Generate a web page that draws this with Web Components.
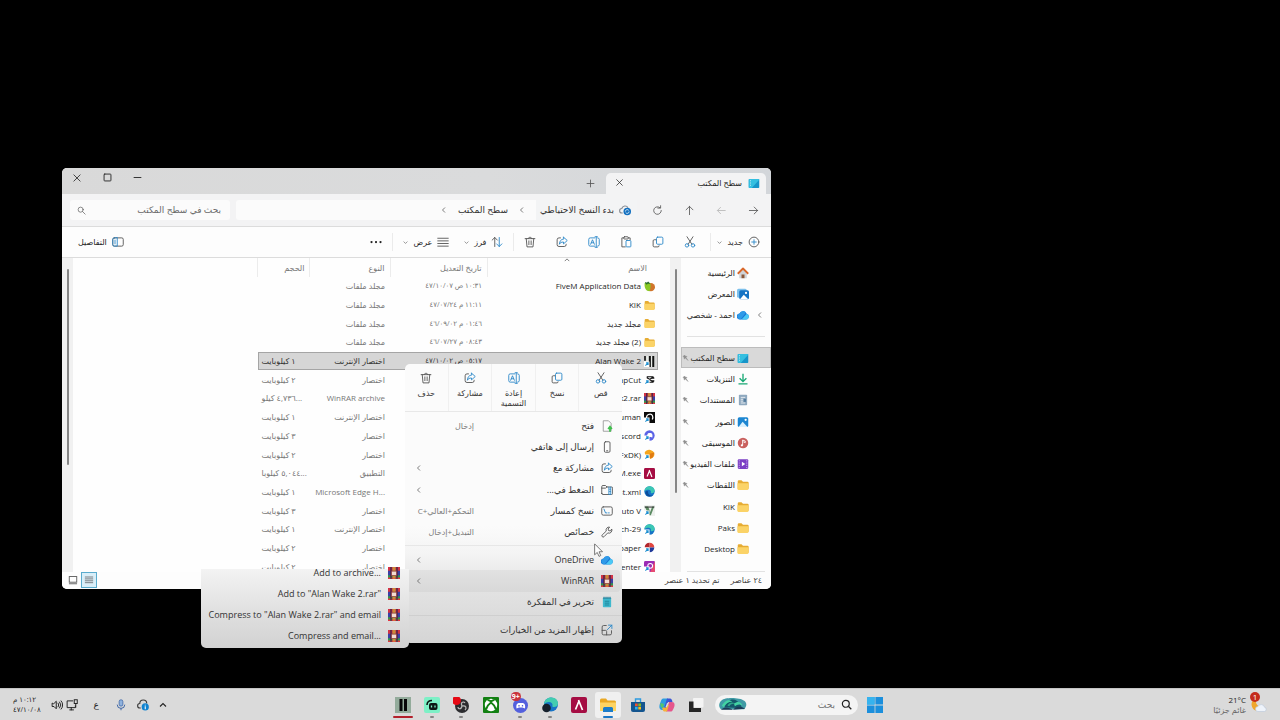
<!DOCTYPE html>
<html lang="ar" dir="rtl">
<head>
<meta charset="utf-8">
<title>سطح المكتب</title>
<style>
    html, body {
        height: 100%;
        margin: 0;
    }
    body {
        background: #000;
        overflow: hidden;
        font-family: "Open Sans", "Noto Sans", "DejaVu Sans", sans-serif;
        font-size: 8px;
        line-height: 12px;
        color: #1f1f1f;
    }
</style>
</head>
<body>
<desk-top>
    <explorer-window></explorer-window>
    <context-menu></context-menu>
    <sub-menu></sub-menu>
    <ui-icon class="cursor" name="cursor" size="14"></ui-icon>
    <task-bar slot="bar"></task-bar>
</desk-top>

<script>
const LINE = 'fill="none" stroke="#555" stroke-width="1.2" stroke-linecap="round" stroke-linejoin="round"';
const BLUE = 'fill="none" stroke="#2b88c8" stroke-width="1.2" stroke-linecap="round" stroke-linejoin="round"';
const DARK = 'fill="none" stroke="#222" stroke-width="1.3" stroke-linecap="round" stroke-linejoin="round"';
const SHORTCUT = '<rect x="0" y="8" width="8" height="8" fill="#fff"/><path d="M2 14l4-4M3 10h3v3" fill="none" stroke="#1c8fd0" stroke-width="1.5"/>';

const ICONS = {
    close: `<path ${DARK} d="M3 3l10 10M13 3L3 13"/>`,
    max: `<rect ${DARK} x="3" y="3" width="10" height="10" rx="1"/>`,
    min: `<path ${DARK} d="M3 8h10"/>`,
    plus: `<path ${LINE} d="M8 3v10M3 8h10"/>`,
    right: `<path ${LINE} d="M2 8h12M9 3l5 5-5 5"/>`,
    left: `<path fill="none" stroke="#b5b5b5" stroke-width="1.2" d="M14 8H2M7 3L2 8l5 5"/>`,
    up: `<path ${LINE} d="M8 14V2M3 7l5-5 5 5"/>`,
    refresh: `<path ${LINE} d="M13.500 8A5.500 5.500 0 1 1 11.500 3.800M8.500 4.500h4V1"/>`,
    search: `<circle ${LINE} cx="6.500" cy="6.500" r="4.500"/><path ${LINE} d="M10 10l4.500 4.500"/>`,
    searchBold: `<circle cx="7" cy="7" r="5" fill="none" stroke="#222" stroke-width="1.800"/><path d="M11 11l4 4" stroke="#222" stroke-width="1.800"/>`,
    chevLeft: `<path fill="none" stroke="#555" stroke-width="1.500" d="M10 3L5 8l5 5"/>`,
    chevDown: `<path fill="none" stroke="#777" stroke-width="2.400" d="M2 5l6 6 6-6"/>`,
    chevUp: `<path fill="none" stroke="#555" stroke-width="2" d="M2 11l6-6 6 6"/>`,
    chevUpDark: `<path fill="none" stroke="#222" stroke-width="2.200" d="M2 11l6-6 6 6"/>`,
    circlePlus: `<circle ${LINE} cx="8" cy="8" r="6.500"/><path ${BLUE} d="M8 5v6M5 8h6"/>`,
    cut: `<path ${LINE} d="M4 1l6.500 10M12 1L5.500 11"/><circle ${BLUE} cx="4" cy="12.500" r="2.300"/><circle ${BLUE} cx="12" cy="12.500" r="2.300"/>`,
    copy: `<rect ${BLUE} x="6" y="1.500" width="8.500" height="9.500" rx="1.500"/><path ${LINE} d="M5 5H3a1.500 1.500 0 0 0-1.500 1.500V13A1.500 1.500 0 0 0 3 14.500h5A1.500 1.500 0 0 0 9.500 13"/>`,
    paste: `<path ${LINE} d="M5 2.500H2.500v12H7M11 2.500h2.500V5"/><rect ${LINE} x="5" y="1" width="6" height="3" rx="1"/><rect ${BLUE} x="8" y="6" width="6.500" height="8.500" rx="1"/>`,
    rename: `<path ${BLUE} d="M9 2.500H3A2 2 0 0 0 1 4.500v7a2 2 0 0 0 2 2h6M11 1v14M9.500 1h3M9.500 15h3M13 2.500a2 2 0 0 1 2 2v7a2 2 0 0 1-2 2M3.500 11L6 5l2.500 6M4.500 9h3"/>`,
    share: `<path ${LINE} d="M6 2.500H4A2.500 2.500 0 0 0 1.500 5v6.500A2.500 2.500 0 0 0 4 14h7a2.500 2.500 0 0 0 2.500-2.500V11"/><path ${BLUE} d="M10 1.500L15 6l-5 4.500V8C7 8 5.500 9 4.500 11 4.700 7 6.500 4.300 10 4z"/>`,
    trash: `<path ${LINE} d="M1.500 3.500h13M5.500 3.500C5.500 1 10.500 1 10.500 3.500M3 3.500l1 11h8l1-11M6.500 6.500v5M9.500 6.500v5"/>`,
    sort: `<path ${LINE} d="M5 14V2M1.500 5.500L5 2l3.500 3.500"/><path ${BLUE} d="M11 2v12M7.500 10.500L11 14l3.500-3.500"/>`,
    view: `<path ${LINE} d="M1 3h14M1 6.500h14M1 10h14M1 13.500h14"/>`,
    more: `<g fill="#222"><circle cx="2" cy="8" r="1.500"/><circle cx="8" cy="8" r="1.500"/><circle cx="14" cy="8" r="1.500"/></g>`,
    details: `<rect ${LINE} x="1" y="2.500" width="14" height="11" rx="2"/><path ${BLUE} d="M7 2.500v11H3a2 2 0 0 1-2-2v-7a2 2 0 0 1 2-2zM4 5.500v5"/>`,
    desktop: `<rect x="1" y="2.500" width="14" height="12" rx="1" fill="#1795c9"/><path d="M1 3.500a1 1 0 0 1 1-1h12a1 1 0 0 1 1 1L5 14.500H2a1 1 0 0 1-1-1z" fill="#35bfe0"/><path d="M3 5h1M3 8h1M3 11h1" stroke="#fff" stroke-width="1.200"/>`,
    home: `<path d="M3 7v8h3.500v-4h3v4H13V7L8 3z" fill="#cfd3d8"/><path d="M1 9l7-7 7 7" fill="none" stroke="#d9682b" stroke-width="2.400" stroke-linejoin="round"/><path d="M6 10h4v5H6z" fill="#8a5a3c"/>`,
    gallery: `<rect x="0" y="1" width="13" height="12" rx="2" fill="#7cc0ec"/><rect x="3" y="3" width="13" height="12" rx="2" fill="#1473c4"/><path d="M4 15l5-6 6 6z" fill="#fff"/><circle cx="12" cy="6.500" r="1.500" fill="#fff"/>`,
    cloud: `<path d="M4 14a4 4 0 0 1-.6-8A5.200 5.200 0 0 1 13 6.200a4 4 0 0 1-1 7.800z" fill="#1a78d6"/><path d="M3.400 6A5.200 5.200 0 0 1 12 4.500L5 13.800A4 4 0 0 1 3.400 6z" fill="#2f9ae8"/><path d="M6 14l7-7.800a4 4 0 0 1-1 7.800z" fill="#4cc9f5"/>`,
    cloudSync: `<path fill="none" stroke="#8a8f96" stroke-width="1.500" d="M5 12H4a3 3 0 0 1-.3-6A4.500 4.500 0 0 1 12 5"/><circle cx="11" cy="10" r="5" fill="#1270c0"/><path d="M8.500 10a2.500 2.500 0 0 1 4.500-1.500M13.500 10a2.500 2.500 0 0 1-4.500 1.500" fill="none" stroke="#fff"/>`,
    cloudInfo: `<path fill="none" stroke="#3c3c3c" stroke-width="1.500" d="M5 12H4a3 3 0 0 1-.3-6A4.500 4.500 0 0 1 13 6"/><circle cx="11" cy="10.500" r="4.800" fill="#1083d0"/><path d="M11 9.500v4M11 7.500v1" stroke="#fff" stroke-width="1.400"/>`,
    download: `<path d="M8 1v10M3.500 7L8 11.500 12.500 7M2 14.500h12" fill="none" stroke="#18a874" stroke-width="1.800"/>`,
    document: `<rect x="2.500" y="1" width="11" height="14" rx="1" fill="#8fa9bf"/><path d="M5 4.500h6M5 7h3M5 9.500h3M5 12h6" stroke="#fff"/><path d="M9 6.500h3v4H9z" fill="#557d9f"/>`,
    picture: `<rect x="1" y="1.500" width="14" height="13" rx="2" fill="#1c86d1"/><path d="M2 14.500l5.500-7 6.500 7z" fill="#d9f0fd"/><circle cx="11.500" cy="5" r="1.500" fill="#fff"/>`,
    music: `<circle cx="8" cy="8" r="7" fill="#c9605e"/><path d="M7.500 11V4l3.500 1.500v2L8.500 6.500" fill="none" stroke="#fff" stroke-width="1.200"/><circle cx="6.500" cy="11" r="1.500" fill="#fff"/>`,
    video: `<rect x="1" y="1.500" width="14" height="13" rx="1.500" fill="#7b3fc4"/><path d="M3 3v11M13 3v11" stroke="#c9a9f0" stroke-width="1.300" stroke-dasharray="1.500 1.500"/><path d="M6.500 5l4.500 3-4.500 3z" fill="#fff"/>`,
    folder: `<path d="M1 3A1.500 1.500 0 0 1 2.500 1.500H6l2 2h6A1.500 1.500 0 0 1 15.500 5v8H1z" fill="#e6ac33"/><path d="M.5 5.500h15v7.500A1.500 1.500 0 0 1 14 14.500H2A1.500 1.500 0 0 1 .5 13z" fill="#fbd367"/>`,
    pin: `<path d="M5 2L2 5l2 1 .5 4L7 8l5 5-4-6 2-2-4-1z" fill="#8e8e8e" stroke="#8e8e8e"/>`,
    fivem: `<circle cx="10" cy="9" r="6" fill="#d0752b"/><path d="M1 3h8c1 3 1 8-1 12C3 15 0 10 1 3z" fill="#8ac926"/><path d="M2 2l2 2 2-2 2 2" stroke="#256b2c" stroke-width="2" fill="none"/>`,
    alan: `<rect width="16" height="16" fill="#e9ede9"/><path d="M7 0h3v16H7zM12 0h3v16h-3z" fill="#111"/><path d="M0 0h3v7H0z" fill="#333"/>${SHORTCUT}`,
    capcut: `<path d="M4 4h8v2h3M4 12h8v-2h3M4 5l10 7M4 11l10-7" fill="none" stroke="#111" stroke-width="1.800"/>${SHORTCUT}`,
    rar: `<rect width="16" height="16" fill="#3b3fa5"/><path d="M0 0h16v5H0z" fill="#d23345"/><path d="M0 11h16v5H0z" fill="#2f9a4c"/><path d="M3 0h2v16H3zM11 0h2v16h-2z" fill="#4b2546"/><path d="M6 0h4v16H6z" fill="#c98d3a"/><rect x="4.500" y="5.500" width="7" height="6" fill="#f3dcd2" stroke="#8a3a3b"/><path d="M0 14h3v2H0zM13 14h3v2h-3zM5 14h2v2H5zM9 14h2v2H9z" fill="#e3343f"/>`,
    human: `<rect width="16" height="16" fill="#0c0c0c"/><path d="M4 12C2 5 6 3 9 3s5 4 3 8" fill="none" stroke="#fff" stroke-width="1.800"/>${SHORTCUT}`,
    discordLink: `<circle cx="8" cy="8" r="7.500" fill="#5b63e6"/><path d="M5 11c-1-3 0-6 2-6.500h3c2 .5 3 3.500 2 6.500l-2-1H7z" fill="#fff"/>${SHORTCUT}`,
    fxdk: `<path d="M1 5c2-4 7-5 10-3 3 1 5 4 4 7s-4 5-6 5l-3-3-4-1z" fill="#f5a51e"/><path d="M8 7l7-2-2 7-4 2z" fill="#e07b12"/>${SHORTCUT}`,
    lambda: `<rect width="16" height="16" rx="2" fill="#a50d43"/><path d="M4.500 12.500L8 4M7.500 3l4 10" fill="none" stroke="#fff" stroke-width="1.700"/>`,
    edge: `<circle cx="8" cy="8" r="7.500" fill="#1673c6"/><path d="M.5 8C1 3 4.500.5 8 .5c5 0 7.500 3.500 7.500 6.500 0 2.500-2 3.500-4 3.500-1.500 0-2-.7-1.500-1.500C10.500 7.500 9 5.500 6.500 5.500S1.500 6.500.5 8z" fill="#3cc7b4"/><path d="M6 8c-1 4 3 7 7 5.500C10 17 2 15 2 9c1-2 3-2 4-1z" fill="#0b4c9c"/>`,
    edgeLink: `<circle cx="8" cy="8" r="7.500" fill="#1673c6"/><path d="M.5 8C1 3 4.500.5 8 .5c5 0 7.500 3.500 7.500 6.500 0 2.500-2 3.500-4 3.500-1.500 0-2-.7-1.500-1.500C10.500 7.500 9 5.500 6.500 5.500S1.500 6.500.5 8z" fill="#3cc7b4"/>${SHORTCUT}`,
    gta: `<rect width="16" height="16" fill="#eef1ee"/><path d="M1 2h5l3 8 3-8h3L10 15H7z" fill="#5b8a62"/><path d="M1 3h14" stroke="#333" stroke-width="1.500"/>${SHORTCUT}`,
    wall: `<path d="M8 8V1a7 7 0 0 1 7 7z" fill="#e2463f"/><path d="M8 8h7a7 7 0 0 1-7 7z" fill="#203a9a"/><path d="M8 8H1a7 7 0 0 1 7-7z" fill="#b3262d"/>${SHORTCUT}`,
    center: `<rect width="16" height="16" rx="2" fill="#9b2bb4"/><path d="M16 0v16H9z" fill="#e64b72"/><circle cx="9" cy="7" r="3.500" fill="none" stroke="#fff" stroke-width="1.500"/>${SHORTCUT}`,
    open: `<path d="M3 1h7l3.500 3.500V15H3z" fill="#fbfbfb" stroke="#888"/><path d="M12 9v6.500M9.500 12L12 9l2.500 3" fill="none" stroke="#3fc04c" stroke-width="2.400"/>`,
    phone: `<rect ${LINE} x="4.500" y="1" width="7.500" height="14" rx="1.500"/><path ${LINE} d="M7.500 13h1.500"/>`,
    zip: `<path ${LINE} d="M1 12.500v-9A1.500 1.500 0 0 1 2.500 2h3.500l2 2h6a1.500 1.500 0 0 1 1.500 1.500v7A1.500 1.500 0 0 1 14 14H2.500A1.500 1.500 0 0 1 1 12.500zM1 5.500h5L8 4"/><path ${BLUE} d="M10.500 4v10h2.500V4M11.500 7h1M11.500 10h1"/>`,
    path: `<rect ${LINE} x="1" y="2.500" width="14" height="11" rx="2"/><path ${BLUE} d="M4 5.500l2 5M7 10.500h1M10 10.500h1"/>`,
    wrench: `<path ${LINE} d="M14.500 4.500a4 4 0 0 1-5.500 4.700L4 14.300a1.700 1.700 0 0 1-2.400-2.400L7 6.800A4 4 0 0 1 11.500 1.500L9.500 4l.5 2 2 .5z"/>`,
    notepad: `<rect x="2.500" y="2" width="11" height="13" rx="1" fill="#3eb8cd"/><path d="M4 1v3M6.700 1v3M9.300 1v3M12 1v3" stroke="#246c86" stroke-width="1.200"/><path d="M5 7h6M5 9.500h6M5 12h6" stroke="#17788f"/>`,
    external: `<path ${LINE} d="M7 2H3.500A2 2 0 0 0 1.500 4v8.500a2 2 0 0 0 2 2H12a2 2 0 0 0 2-2V9M1.500 8.500H6a1.500 1.500 0 0 1 1.500 1.500v4.500"/><path ${BLUE} d="M8.500 7.500l6-6M10 1.500h4.500V6"/>`,
    cursor: `<path d="M3 1v12.500l3-2.700 2 4.500 2-1-2-4.300h4z" fill="#fff" stroke="#555" stroke-width=".9"/>`,
    listView: `<rect x="2.500" y="3" width="11" height="10" fill="#d8e4ea"/><path d="M2.500 4h11M2.500 6.500h11M2.500 9h11M2.500 11.500h11" stroke="#7b868c" stroke-width="1.300"/>`,
    tileView: `<rect x="2" y="2.500" width="12" height="9" fill="none" stroke="#555" stroke-width="1.400"/><path d="M1.500 14h13" stroke="#555" stroke-width="1.400"/>`,
    start: `<path d="M0 0h7.600v7.600H0zM8.400 0H16v7.600H8.400zM0 8.400h7.600V16H0zM8.400 8.400H16V16H8.400z" fill="#1b8fdc"/><path d="M0 0h7.600v7.600H0z" fill="#36b3ee"/>`,
    taskView: `<rect x="5" y="1" width="10.500" height="9.500" rx="1" fill="#f4f4f4"/><path d="M1 4.500h4.500v6.500H13V15H1z" fill="#262626"/>`,
    copilot: `<path d="M4 1.500h5L6 13H3C0 13 0 9 1 6.500S2.500 1.500 4 1.500z" fill="#2d9de0"/><path d="M8 1.500h3c1.500 0 2 1.500 2.500 3.500H9L7 11c-.5 1.500-1 2-2.500 2z" fill="#3b54d4"/><path d="M12 14.500H7L10 5h3c3 0 3 3.500 2 5.500s-1.500 4-3 4z" fill="#e5568c"/><path d="M8 14.500H5.500C4 14.500 3.500 12.500 3 10.500h4.500L8.500 8l1.500 0z" fill="#f4b23a"/><path d="M1.500 6C1 9 2 11 4 11l1-4z" fill="#57c46a"/><path d="M9.500 6L8 10H6.500L8 6z" fill="#dadada"/>`,
    store: `<path d="M1 5h14v8a2 2 0 0 1-2 2H3a2 2 0 0 1-2-2z" fill="#14558f"/><path d="M5.500 5V2h5v3" fill="none" stroke="#2e9be0" stroke-width="1.400"/><path d="M5 6.500h2.700v2.700H5z" fill="#f0532c"/><path d="M8.300 6.500H11v2.700H8.300z" fill="#83bb26"/><path d="M5 9.800h2.700v2.700H5z" fill="#2ab0ee"/><path d="M8.300 9.800H11v2.700H8.300z" fill="#fcbd13"/>`,
    explorer: `<path d="M0 3a1.500 1.500 0 0 1 1.500-1.500H6l1.500 2h7A1.500 1.500 0 0 1 16 5v9H0z" fill="#e9a824"/><path d="M0 5.500h16V14H0z" fill="#fdd463"/><path d="M3 15v-3.500A1.500 1.500 0 0 1 4.500 10h7a1.500 1.500 0 0 1 1.500 1.500V15z" fill="#1b7cc9"/>`,
    edgeDot: `<circle cx="9" cy="7.500" r="7" fill="#1673c6"/><path d="M2 7.500C2.500 2.500 5.500.5 9 .5c5 0 7 3 7 6 0 2.500-2 3.500-4 3.500-1.500 0-2-.7-1.500-1.500C11 7 9.500 5 7 5s-4 1-5 2.500z" fill="#43cdb0"/><circle cx="4.500" cy="11" r="4.300" fill="#16202c"/>`,
    discordBadge: `<circle cx="8.500" cy="8.500" r="7.500" fill="#5360dd"/><path d="M4.500 11.500c-.5-3 0-5 2-5.500h4.500c2 .5 2.500 2.500 2 5.500l-2.500-1H7z" fill="#fff"/><path d="M7 8v1.500M10.500 8v1.500" stroke="#5360dd" stroke-width="1.300"/>`,
    xbox: `<rect width="16" height="16" rx="1" fill="#128012"/><circle cx="8" cy="8" r="6.200" fill="#fff"/><path d="M3 12.500C4 9 6.500 6.500 8 5.500 9.500 6.500 12 9 13 12.500M4.500 3C6 3 8 4.500 8 4.500S10 3 11.500 3" fill="none" stroke="#128012" stroke-width="2"/>`,
    obs: `<circle cx="9" cy="9" r="7" fill="#2c2c2f"/><path d="M9 9c-2-4 2-5 3-3M9 9c4-1 5 2 3 4M9 9c-1 4-4 3-4 1" fill="none" stroke="#bbb" stroke-width="1.200"/><circle cx="3.500" cy="3.500" r="4.500" fill="#e50914"/>`,
    stream: `<rect width="16" height="16" rx="2" fill="#7df0c6"/><rect x="5" y="6" width="8.500" height="7" rx="2" fill="#0c1714"/><path d="M3 8c0-3 2-4.500 5-4.500" fill="none" stroke="#0c1714" stroke-width="1.600"/><path d="M7.500 8.500v2M11 8.500v2" stroke="#7df0c6" stroke-width="1.300"/>`,
    alanBar: `<rect width="16" height="16" fill="#93ab9b"/><path d="M4.500 2h3v12h-3zM9 2h3v12H9z" fill="#070707"/>`,
    speaker: `<path ${DARK} d="M1.500 6v4H4l3 3V3L4 6zM9.500 5.500a4 4 0 0 1 0 5M11.500 4a6 6 0 0 1 0 8M13.500 2.500a8 8 0 0 1 0 11"/>`,
    network: `<path ${DARK} d="M9 2.500H1.500v9h11V9M5 14.500h5M7 11.500v3"/><rect x="11" y="1" width="4" height="5" fill="none" stroke="#222" stroke-width="1.300"/><path ${DARK} d="M13 6v5"/>`,
    mic: `<rect x="5.500" y="1" width="5" height="8.500" rx="2.500" fill="#8fb2de" stroke="#3c64a4"/><path d="M3 7.500a5 5 0 0 0 10 0M8 12.500V15" fill="none" stroke="#3c64a4" stroke-width="1.300"/>`,
    weather: `<path d="M6 1a6.500 6.500 0 1 0 7 9A6 6 0 0 1 6 1z" fill="#f0a62c"/><path d="M7 14.500a2.500 2.500 0 0 1 0-5 3.500 3.500 0 0 1 6.500.7 2.200 2.200 0 0 1 0 4.300z" fill="#eef3fa" stroke="#b9c6d8" stroke-width=".6"/>`,
    island: `<path d="M3 3.500C6 0 22 0 27 4c3 2 3 6 0 9H2C-1 10 0 6 3 3.500z" fill="#3f9aa5"/><path d="M6 11C8 3 15 1 19 4s5 6 6 8z" fill="#14586a"/><path d="M3 9c4-6 8-7 11-4-4 0-7 2-9 6zM16 7c4-3 8-2 9 2-3-2-6-1-8 1z" fill="#43d3a2"/><path d="M9 9c2-3 5-4 8-2-3 0-5 1-6 3z" fill="#2fa98c"/><path d="M2 13.500c5-4 9-2 13 0zM15 13.500c3-4 9-4 13-1z" fill="#1c3b57"/>`
};

class BaseElement extends HTMLElement {
    constructor() {
        super();
        this.attachShadow({ mode: 'open' });
        this.shadowRoot.innerHTML = `
        <style>
            * { box-sizing: border-box; }
            :host { box-sizing: border-box; }
            button, input {
                font: inherit;
                color: inherit;
                background: none;
                border: none;
                padding: 0;
                margin: 0;
                outline: none;
            }
            button {
                display: flex;
                align-items: center;
                justify-content: center;
            }
            a { color: inherit; text-decoration: none; }
        </style>
        ${this.render()}
        `;
    }
    attr(name, fallback = '') {
        return this.getAttribute(name) || fallback;
    }
    render() {
        return '<slot></slot>';
    }
}

class UiIcon extends BaseElement {
    render() {
        const size = this.attr('size', '12');
        const wide = this.attr('wide', size);
        const box = wide === size ? '0 0 16 16' : '0 0 30 16';
        return `
        <style>
            :host { display: block; flex: none; width: ${wide}px; height: ${size}px; }
            svg { display: block; }
        </style>
        <svg width="${wide}" height="${size}" viewBox="${box}" aria-hidden="true">${ICONS[this.attr('name')]}</svg>
        `;
    }
}
customElements.define('ui-icon', UiIcon);

const icon = (name, size = 12) => `<ui-icon name="${name}" size="${size}"></ui-icon>`;

class DeskTop extends BaseElement {
    render() {
        return `
        <style>
            :host {
                display: flex;
                flex-direction: column;
                height: 100%;
                position: relative;
            }
            main { flex: 1; }
            ::slotted(explorer-window) { position: absolute; top: 168px; left: 62px; right: 509px; }
            ::slotted(context-menu) { position: absolute; top: 364px; left: 405px; }
            ::slotted(sub-menu) { position: absolute; top: 569px; left: 201px; }
            ::slotted(.cursor) { position: absolute; top: 543px; left: 592px; }
        </style>
        <main><slot></slot></main>
        <slot name="bar"></slot>
        `;
    }
}
customElements.define('desk-top', DeskTop);

class TitleBar extends BaseElement {
    render() {
        return `
        <style>
            :host {
                display: flex;
                height: 26px;
                padding-right: 5px;
                background: linear-gradient(to left, #d3d6da, #dadbdc 40%, #d9d9d9);
            }
            .tab {
                display: flex;
                align-items: center;
                width: 160px;
                margin-top: 5px;
                padding: 0 6px 2px 9px;
                gap: 6px;
                background: #f3f3f4;
                border-radius: 5px 5px 0 0;
            }
            .tab span { flex: 1; }
            .add { width: 32px; padding-top: 5px; }
            .controls {
                display: flex;
                margin-right: auto;
                height: 19px;
            }
            .controls button { width: 30px; }
        </style>
        <div class="tab">${icon('desktop')}<span>سطح المكتب</span><button aria-label="إغلاق">${icon('close', 9)}</button></div>
        <button class="add" aria-label="علامة تبويب جديدة">${icon('plus', 11)}</button>
        <div class="controls">
            <button aria-label="تصغير">${icon('min', 11)}</button>
            <button aria-label="تكبير">${icon('max', 11)}</button>
            <button aria-label="إغلاق">${icon('close', 10)}</button>
        </div>
        `;
    }
}
customElements.define('title-bar', TitleBar);

class AddressBar extends BaseElement {
    render() {
        return `
        <style>
            :host {
                display: flex;
                align-items: center;
                height: 33px;
                padding: 0 2px 0 8px;
                background: #f3f3f4;
                border-bottom: 1px solid #dcdcdc;
                font-size: 9px;
                color: #333;
            }
            .go { width: 32px; height: 20px; }
            .path {
                flex: 1;
                display: flex;
                align-items: center;
                gap: 10px;
                height: 20px;
                margin: 0 4px 0 6px;
                background: #fbfbfb;
                border-radius: 3px;
            }
            .backup {
                display: flex;
                align-items: center;
                gap: 5px;
                height: 20px;
                padding: 0 6px 0 4px;
                background: #f3f4f5;
            }
            .search {
                display: flex;
                align-items: center;
                width: 160px;
                height: 20px;
                padding: 0 9px 0 7px;
                background: #fbfbfb;
                border-radius: 3px;
            }
            input { flex: 1; min-width: 0; }
            input::placeholder { color: #6a6a6a; opacity: 1; }
        </style>
        <button class="go" aria-label="للأمام">${icon('right', 11)}</button>
        <button class="go" aria-label="للخلف">${icon('left', 11)}</button>
        <button class="go" aria-label="لأعلى">${icon('up', 11)}</button>
        <button class="go" aria-label="تحديث">${icon('refresh', 11)}</button>
        <div class="path">
            <button class="backup">${icon('cloudSync')}<span>بدء النسخ الاحتياطي</span></button>
            ${icon('chevLeft', 8)}
            <a href="#">سطح المكتب</a>
            ${icon('chevLeft', 8)}
        </div>
        <label class="search"><input type="text" aria-label="بحث" placeholder="بحث في سطح المكتب">${icon('search', 9)}</label>
        `;
    }
}
customElements.define('address-bar', AddressBar);

class ToolBar extends BaseElement {
    render() {
        const actions = [['cut', 'قص'], ['copy', 'نسخ'], ['paste', 'لصق'], ['rename', 'إعادة التسمية'], ['share', 'مشاركة'], ['trash', 'حذف']];
        return `
        <style>
            :host {
                display: flex;
                align-items: center;
                height: 31px;
                padding: 0 11px 0 16px;
                background: #fdfdfd;
                border-bottom: 1px solid #dcdcdc;
            }
            button { height: 20px; gap: 5px; }
            i { width: 1px; height: 18px; background: #ebebeb; }
            .act { width: 32px; }
            .new { margin-left: 6px; }
            .new + i { margin-left: 4px; }
            .sort { margin: 0 10px 0 15px; }
            .view { margin-left: 10px; }
            .more { width: 32px; }
            .details { margin-right: auto; }
        </style>
        <button class="new">${icon('circlePlus')}<span>جديد</span>${icon('chevDown', 5)}</button><i></i>
        ${actions.map(([name, label]) => `<button class="act" aria-label="${label}">${icon(name)}</button>`).join('')}
        <i></i>
        <button class="sort">${icon('sort')}<span>فرز</span>${icon('chevDown', 5)}</button>
        <button class="view">${icon('view')}<span>عرض</span>${icon('chevDown', 5)}</button>
        <i></i>
        <button class="more" aria-label="المزيد">${icon('more')}</button>
        <button class="details">${icon('details')}<span>التفاصيل</span></button>
        `;
    }
}
customElements.define('tool-bar', ToolBar);

class NavItem extends BaseElement {
    render() {
        return `
        <style>
            :host { display: flex; flex: 1; min-width: 0; }
            a {
                flex: 1;
                min-width: 0;
                display: flex;
                align-items: center;
                gap: 1px;
                padding: 0 21px 0 0;
                white-space: nowrap;
                border: 1px solid transparent;
            }
            :host([arrow]) a { padding-right: 6px; }
            :host([arrow]) a > :first-child { margin-left: 6px; }
            :host([selected]) a { background: #d9d9d9; border-color: #bcbcbc; }
            span { flex: 1; margin-right: 1px; min-width: 0; }
        </style>
        <a href="#">${this.hasAttribute('arrow') ? icon('chevLeft', 8) : ''}${icon(this.attr('icon'))}<span><slot></slot></span>${this.hasAttribute('pinned') ? icon('pin', 8) : ''}</a>
        `;
    }
}
customElements.define('nav-item', NavItem);

class NavPane extends BaseElement {
    render() {
        return `
        <style>
            :host {
                display: flex;
                flex-direction: column;
                width: 90px;
                height: 314px;
                padding-top: 4px;
                background: #fdfdfd;
            }
            nav { height: 298px; display: flex; flex-direction: column; }
            .gap { flex: 1; display: flex; align-items: center; }
            .gap hr { flex: 1; }
            hr { margin: 0 6px; border: none; border-top: 1px solid #e2e2e2; }
            nav + hr { margin-top: 11px; }
        </style>
        <nav>
            <nav-item icon="home">الرئيسية</nav-item>
            <nav-item icon="gallery">المعرض</nav-item>
            <nav-item icon="cloud" arrow>احمد - شخصي</nav-item>
            <div class="gap"><hr></div>
            <nav-item icon="desktop" selected pinned>سطح المكتب</nav-item>
            <nav-item icon="download" pinned>التنزيلات</nav-item>
            <nav-item icon="document" pinned>المستندات</nav-item>
            <nav-item icon="picture" pinned>الصور</nav-item>
            <nav-item icon="music" pinned>الموسيقى</nav-item>
            <nav-item icon="video" pinned>ملفات الفيديو</nav-item>
            <nav-item icon="folder" pinned>اللقطات</nav-item>
            <nav-item icon="folder">KIK</nav-item>
            <nav-item icon="folder">Paks</nav-item>
            <nav-item icon="folder">Desktop</nav-item>
        </nav>
        <hr>
        `;
    }
}
customElements.define('nav-pane', NavPane);

const FILES = [
    ['fivem', 'FiveM Application Data', '١٠:٣١ ص ٤٧/١٠/٠٧', 'مجلد ملفات', ''],
    ['folder', 'KIK', '١١:١١ م ٤٧/٠٧/٢٤', 'مجلد ملفات', ''],
    ['folder', 'مجلد جديد', '٠١:٤٦ م ٤٦/٠٩/٠٢', 'مجلد ملفات', ''],
    ['folder', '(2) مجلد جديد', '٠٨:٤٣ م ٤٦/٠٧/٢٧', 'مجلد ملفات', ''],
    ['alan', 'Alan Wake 2', '٠٥:١٧ ص ٤٧/١٠/٠٢', 'اختصار الإنترنت', '١ كيلوبايت'],
    ['capcut', 'CapCut', '', 'اختصار', '٢ كيلوبايت'],
    ['rar', 'k2.rar', '', 'WinRAR archive', '...٤,٧٣٦ كيلو'],
    ['human', 'Human', '', 'اختصار الإنترنت', '١ كيلوبايت'],
    ['discordLink', 'Discord', '', 'اختصار', '٣ كيلوبايت'],
    ['fxdk', '(FxDK)', '', 'اختصار', '٢ كيلوبايت'],
    ['lambda', 'FiveM.exe', '', 'التطبيق', '...٥,٠٤٤ كيلوبا'],
    ['edge', 'list.xml', '', 'Microsoft Edge H...', '١ كيلوبايت'],
    ['gta', 'Auto V', '', 'اختصار', '٣ كيلوبايت'],
    ['edgeLink', 'tech-29', '', 'اختصار الإنترنت', '١ كيلوبايت'],
    ['wall', 'paper', '', 'اختصار', '٢ كيلوبايت'],
    ['center', 'Center', '', 'اختصار', '٢ كيلوبايت']
];

class FileList extends BaseElement {
    render() {
        const rows = FILES.map(([pic, name, date, type, size]) => `
            <tr${name === 'Alan Wake 2' ? ' class="selected"' : ''}>
                <td><div class="name">${icon(pic, 11)}<span dir="${/[\u0600-\u06ff]/.test(name) ? 'rtl' : 'ltr'}">${name}</span></div></td>
                <td class="date">${date}</td>
                <td><bdi>${type}</bdi></td>
                <td class="size">${size}</td>
            </tr>`).join('');
        return `
        <style>
            :host {
                display: block;
                flex: 1;
                height: 314px;
                padding-right: 12px;
                overflow: hidden;
                background: #fefefe;
                position: relative;
            }
            table {
                table-layout: fixed;
                width: 401px;
                height: 318px;
                border-collapse: collapse;
                color: #777;
            }
            th, td {
                padding: 0 5px 0 3px;
                font-weight: normal;
                text-align: right;
                white-space: nowrap;
                line-height: 12px;
                vertical-align: middle;
            }
            th { height: 19px; border-left: 1px solid #ececec; }
            th:first-child { width: 171px; padding-right: 11px; }
            th:nth-child(2) { width: 97px; }
            th:nth-child(3) { width: 81px; }
            th:last-child { padding-right: 4px; }
            td:first-child { padding-right: 3px; color: #1f1f1f; }
            td.date { font-size: 7px; }
            td.size { text-align: left; padding: 0 0 0 4px; }
            .name { display: flex; align-items: center; gap: 3px; }
            .selected { background: #d6d6d6; outline: 1px solid #a5a5a5; outline-offset: -1px; color: #333; }
            .up { position: absolute; top: -1px; right: 100px; }
        </style>
        <table>
            <thead><tr><th>الاسم</th><th>تاريخ التعديل</th><th>النوع</th><th>الحجم</th></tr></thead>
            <tbody>${rows}</tbody>
        </table>
        <ui-icon class="up" name="chevUp" size="6"></ui-icon>
        `;
    }
}
customElements.define('file-list', FileList);

class ScrollBar extends BaseElement {
    render() {
        return `
        <style>
            :host { display: block; width: 11px; padding: 11px 4px 0 5px; background: #f1f1f1; }
            div { height: ${this.attr('thumb')}px; background: #868686; border-radius: 1px; }
        </style>
        <div></div>
        `;
    }
}
customElements.define('scroll-bar', ScrollBar);

class StatusBar extends BaseElement {
    render() {
        return `
        <style>
            :host {
                display: flex;
                align-items: center;
                height: 17px;
                padding: 0 9px 1px 3px;
                gap: 11px;
                background: #fdfdfd;
                color: #444;
            }
            .views { display: flex; margin-right: auto; }
            button { width: 16px; height: 16px; }
            .on { background: #d9eef8; border: 1px solid #5aabcd; }
        </style>
        <span>٢٤ عناصر</span>
        <span>تم تحديد ١ عنصر</span>
        <div class="views">
            <button class="on" aria-label="تفاصيل">${icon('listView')}</button>
            <button aria-label="مصغرات">${icon('tileView', 10)}</button>
        </div>
        `;
    }
}
customElements.define('status-bar', StatusBar);

class ExplorerWindow extends BaseElement {
    render() {
        return `
        <style>
            :host {
                display: block;
                overflow: hidden;
                border-radius: 5px;
                background: #fdfdfd;
            }
            .body { display: flex; }
        </style>
        <title-bar></title-bar>
        <address-bar></address-bar>
        <tool-bar></tool-bar>
        <div class="body">
            <nav-pane></nav-pane>
            <scroll-bar thumb="224"></scroll-bar>
            <file-list></file-list>
            <scroll-bar thumb="196"></scroll-bar>
        </div>
        <status-bar></status-bar>
        `;
    }
}
customElements.define('explorer-window', ExplorerWindow);

class MenuItem extends BaseElement {
    render() {
        return `
        <style>
            :host { display: flex; flex: 1; }
            button {
                flex: 1;
                justify-content: flex-start;
                gap: 7px;
                padding: 0 7px 0 8px;
                white-space: nowrap;
            }
            :host([hover]) button { background: rgba(0, 0, 0, .04); border-radius: 3px; }
            .label { flex: 1; text-align: right; }
            kbd { width: 59px; font: inherit; font-size: 8px; color: #7a7a7a; text-align: right; }
        </style>
        <button>
            ${icon(this.attr('icon'))}
            <span class="label" dir="${this.hasAttribute('latin') ? 'ltr' : 'rtl'}"><slot></slot></span>
            ${this.hasAttribute('keys') ? `<kbd>${this.attr('keys')}</kbd>` : ''}
            ${this.hasAttribute('more') ? icon('chevLeft', 8) : ''}
        </button>
        `;
    }
}
customElements.define('menu-item', MenuItem);

class ContextMenu extends BaseElement {
    render() {
        const quick = [['cut', 'قص'], ['copy', 'نسخ'], ['rename', 'إعادة التسمية'], ['share', 'مشاركة'], ['trash', 'حذف']];
        return `
        <style>
            :host {
                display: block;
                width: 217px;
                border-radius: 5px;
                background: linear-gradient(#fbfbfb 58%, #f4f4f4 68%, #e3e3e3 80%, #d5d5d5);
                font-size: 9px;
                color: #333;
                overflow: hidden;
            }
            .quick { display: flex; height: 48px; border-bottom: 1px solid #e8e8e8; }
            .quick button {
                flex: 1;
                flex-direction: column;
                justify-content: flex-start;
                padding-top: 8px;
                gap: 4px;
                font-size: 8px;
                line-height: 10px;
            }
            .quick button + button { border-right: 1px solid #f0f0f0; }
            .group { display: flex; flex-direction: column; padding: 0 2px; margin: 3px 0 2px; }
            .six { height: 128px; }
            .three { height: 64px; }
            .one { height: 22px; }
            hr { margin: 0; border: none; border-top: 1px solid rgba(0, 0, 0, .06); }
        </style>
        <div class="quick">
            ${quick.map(([name, label]) => `<button>${icon(name)}<span>${label}</span></button>`).join('')}
        </div>
        <div class="group six">
            <menu-item icon="open" keys="إدخال">فتح</menu-item>
            <menu-item icon="phone">إرسال إلى هاتفي</menu-item>
            <menu-item icon="share" more>مشاركة مع</menu-item>
            <menu-item icon="zip" more>الضغط في...</menu-item>
            <menu-item icon="path" keys="التحكم+العالي+C">نسخ كمسار</menu-item>
            <menu-item icon="wrench" keys="التبديل+إدخال">خصائص</menu-item>
        </div>
        <hr>
        <div class="group three">
            <menu-item icon="cloud" latin more>OneDrive</menu-item>
            <menu-item icon="rar" latin more hover>WinRAR</menu-item>
            <menu-item icon="notepad">تحرير في المفكرة</menu-item>
        </div>
        <hr>
        <div class="group one">
            <menu-item icon="external">إظهار المزيد من الخيارات</menu-item>
        </div>
        `;
    }
}
customElements.define('context-menu', ContextMenu);

class SubMenu extends BaseElement {
    render() {
        return `
        <style>
            :host {
                display: flex;
                flex-direction: column;
                justify-content: flex-end;
                width: 208px;
                height: 79px;
                padding: 0 2px 1px;
                border-radius: 0 0 5px 5px;
                background: linear-gradient(#f3f3f3, #dedede 60%, #d2d2d2);
                font-size: 9px;
                color: #333;
            }
            .items { flex: none; display: flex; flex-direction: column; height: 85px; }
        </style>
        <div class="items">
            <menu-item icon="rar" latin>Add to archive...</menu-item>
            <menu-item icon="rar" latin>Add to "Alan Wake 2.rar"</menu-item>
            <menu-item icon="rar" latin>Compress to "Alan Wake 2.rar" and email</menu-item>
            <menu-item icon="rar" latin>Compress and email...</menu-item>
        </div>
        `;
    }
}
customElements.define('sub-menu', SubMenu);

class TaskApp extends BaseElement {
    render() {
        return `
        <style>
            :host { display: flex; flex: 1; justify-content: center; position: relative; }
            button { width: 26px; height: 26px; border-radius: 3px; }
            :host([state=active]) button { background: #f0f0f0; }
            :host([state])::after {
                content: "";
                position: absolute;
                bottom: 0;
                width: 4px;
                height: 2px;
                border-radius: 1px;
                background: #858585;
            }
            :host([state=active])::after { width: 10px; background: #1a77c5; }
            :host([state=alert])::after { width: 20px; background: #b3202c; }
            b {
                position: absolute;
                top: 0;
                right: 14px;
                padding: 0 1px;
                border-radius: 5px;
                background: #c9323c;
                color: #fff;
                font-size: 7px;
                line-height: 9px;
            }
        </style>
        <button aria-label="${this.attr('label')}">${icon(this.attr('icon'), 16)}</button>
        ${this.hasAttribute('badge') ? `<b dir="ltr">${this.attr('badge')}</b>` : ''}
        `;
    }
}
customElements.define('task-app', TaskApp);

class TaskBar extends BaseElement {
    render() {
        return `
        <style>
            :host {
                display: grid;
                grid-template-columns: 1fr auto 1fr;
                align-items: center;
                height: 32px;
                padding: 0 3px 0 0;
                background: #dadada;
                border-top: 1px solid #c4c4c4;
                line-height: 10px;
            }
            .weather {
                justify-self: start;
                gap: 5px;
                padding-right: 10px;
                text-align: right;
                position: relative;
            }
            .weather span { display: block; }
            .weather span + span { color: #666; }
            .weather b {
                position: absolute;
                top: -3px;
                right: 17px;
                width: 10px;
                border-radius: 5px;
                background: #c42b1c;
                color: #fff;
                font-weight: normal;
                text-align: center;
            }
            .middle { display: flex; align-items: center; }
            .start { width: 28px; height: 26px; }
            .search {
                display: flex;
                align-items: center;
                gap: 6px;
                width: 143px;
                height: 20px;
                margin: 0 3px 0 4px;
                padding: 0 6px 0 4px;
                border-radius: 10px;
                background: #f4f4f4;
                color: #666;
                font-size: 9px;
            }
            .search input { flex: 1; min-width: 0; }
            .search input::placeholder { color: #707070; opacity: 1; }
            .apps { display: flex; width: 323px; }
            .tray {
                justify-self: end;
                display: flex;
                align-items: center;
                gap: 10px;
                padding-left: 13px;
            }
            .pair { gap: 3px; }
            .clock { flex-direction: column; align-items: flex-end; font-size: 7px; }
            .lang { width: 17px; font-size: 9px; }
        </style>
        <button class="weather">
            ${icon('weather', 16)}<b>1</b>
            <span><span dir="ltr">21°C</span><span>غائم جزئيًا</span></span>
        </button>
        <div class="middle">
            <button class="start" aria-label="ابدأ">${icon('start', 16)}</button>
            <label class="search">${icon('searchBold', 11)}<input type="text" placeholder="بحث" aria-label="بحث"><ui-icon name="island" size="15" wide="28"></ui-icon></label>
            <div class="apps">
                <task-app icon="taskView" label="عرض المهام"></task-app>
                <task-app icon="copilot" label="Copilot"></task-app>
                <task-app icon="store" label="Store"></task-app>
                <task-app icon="explorer" label="مستكشف الملفات" state="active"></task-app>
                <task-app icon="lambda" label="FiveM"></task-app>
                <task-app icon="edgeDot" label="Edge" state="open"></task-app>
                <task-app icon="discordBadge" label="Discord" state="open" badge="9+"></task-app>
                <task-app icon="xbox" label="Xbox"></task-app>
                <task-app icon="obs" label="OBS" state="open"></task-app>
                <task-app icon="stream" label="Streamlabs" state="open"></task-app>
                <task-app icon="alanBar" label="Alan Wake 2" state="alert"></task-app>
            </div>
        </div>
        <div class="tray">
            <button aria-label="إظهار الأيقونات المخفية">${icon('chevUpDark', 8)}</button>
            <button aria-label="OneDrive">${icon('cloudInfo')}</button>
            <button aria-label="ميكروفون">${icon('mic')}</button>
            <button class="lang">ع</button>
            <button class="pair" aria-label="الشبكة والصوت">${icon('network')}${icon('speaker')}</button>
            <button class="clock"><span>١٠:١٢ م</span><span>٤٧/١٠/٠٨</span></button>
        </div>
        `;
    }
}
customElements.define('task-bar', TaskBar);
</script>
</body>
</html>
